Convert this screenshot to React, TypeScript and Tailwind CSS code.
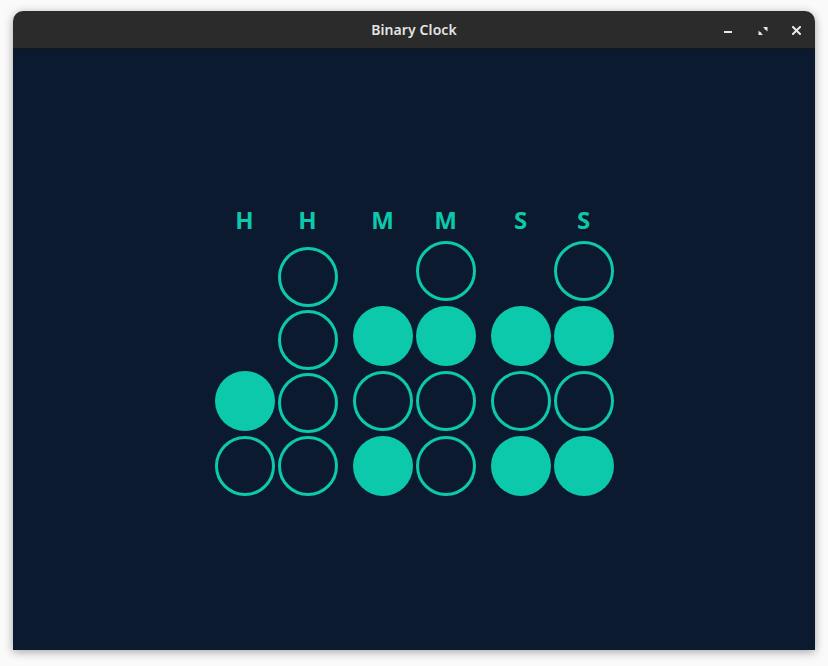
// bits top-to-bottom (8,4,2,1)
const columns: { label: string; bits: number[]; gap: string }[] = [
  { label: 'H', bits: [1, 0], gap: 'gap-[5px]' },
  { label: 'H', bits: [0, 0, 0, 0], gap: 'gap-[3px]' },
  { label: 'M', bits: [1, 0, 1], gap: 'gap-[5px]' },
  { label: 'M', bits: [0, 1, 0, 0], gap: 'gap-[5px]' },
  { label: 'S', bits: [1, 0, 1], gap: 'gap-[5px]' },
  { label: 'S', bits: [0, 1, 0, 1], gap: 'gap-[5px]' },
];

function Dot({ on }: { on: boolean }) {
  return on ? (
    <div className="w-[60px] h-[60px] rounded-full bg-[#0dc9ac]" />
  ) : (
    <div className="w-[60px] h-[60px] rounded-full border-[3px] border-[#0dc9ac]" />
  );
}

function Column({ label, bits, gap }: { label: string; bits: number[]; gap: string }) {
  return (
    <div className="flex flex-col items-center w-[60px]">
      <span className="text-2xl leading-8 font-bold text-[#0dc9ac]">{label}</span>
      <div className={`mt-[5px] h-[255px] flex flex-col justify-end ${gap}`}>
        {bits.map((b, i) => (
          <Dot key={i} on={b === 1} />
        ))}
      </div>
    </div>
  );
}

function TitleBar() {
  return (
    <div className="relative h-[38px] bg-[#2b2b2b] border-b border-[#161616] rounded-t-[10px] flex items-center justify-center">
      <span className="text-[14px] font-semibold text-[#e4e4e4] tracking-[0.1px]">Binary Clock</span>
      <div className="absolute right-0 top-0 h-full">
        {/* minimise */}
        <svg className="absolute left-[-91px] top-[20px]" width="8" height="2" viewBox="0 0 8 2">
          <rect x="0" y="0" width="8" height="2" fill="#e8e8e8" />
        </svg>
        {/* restore */}
        <svg className="absolute left-[-57px] top-[16px]" width="10" height="8" viewBox="0 0 10 8">
          <path d="M5 0H9.5V4.5Z M0.5 3.5V8H5Z" fill="#e8e8e8" />
          <path d="M8.5 1L7 2.5 M1.5 7L3 5.5" stroke="#e8e8e8" strokeWidth="1.5" />
        </svg>
        {/* close */}
        <svg className="absolute left-[-23px] top-[15px]" width="9" height="9" viewBox="0 0 9 9">
          <path d="M1 1L8 8M8 1L1 8" stroke="#e8e8e8" strokeWidth="2" strokeLinecap="square" />
        </svg>
      </div>
    </div>
  );
}

export default function App() {
  return (
    <div className="w-[828px] h-[666px] bg-[#fafafa] pt-[11px] pl-[13px]" style={{ fontFamily: '"Noto Sans", "Open Sans", sans-serif' }}>
      <div className="w-[802px] h-[639px] flex flex-col rounded-t-[10px] shadow-[0_2px_10px_rgba(0,0,0,0.35)]">
        <TitleBar />
        <div className="flex-1 bg-[#0b1a2e] flex items-center justify-center">
          <div className="flex gap-[15px]">
            <div className="flex gap-[3px]">
              <Column {...columns[0]} />
              <Column {...columns[1]} />
            </div>
            <div className="flex gap-[3px]">
              <Column {...columns[2]} />
              <Column {...columns[3]} />
            </div>
            <div className="flex gap-[3px]">
              <Column {...columns[4]} />
              <Column {...columns[5]} />
            </div>
          </div>
        </div>
      </div>
    </div>
  );
}
